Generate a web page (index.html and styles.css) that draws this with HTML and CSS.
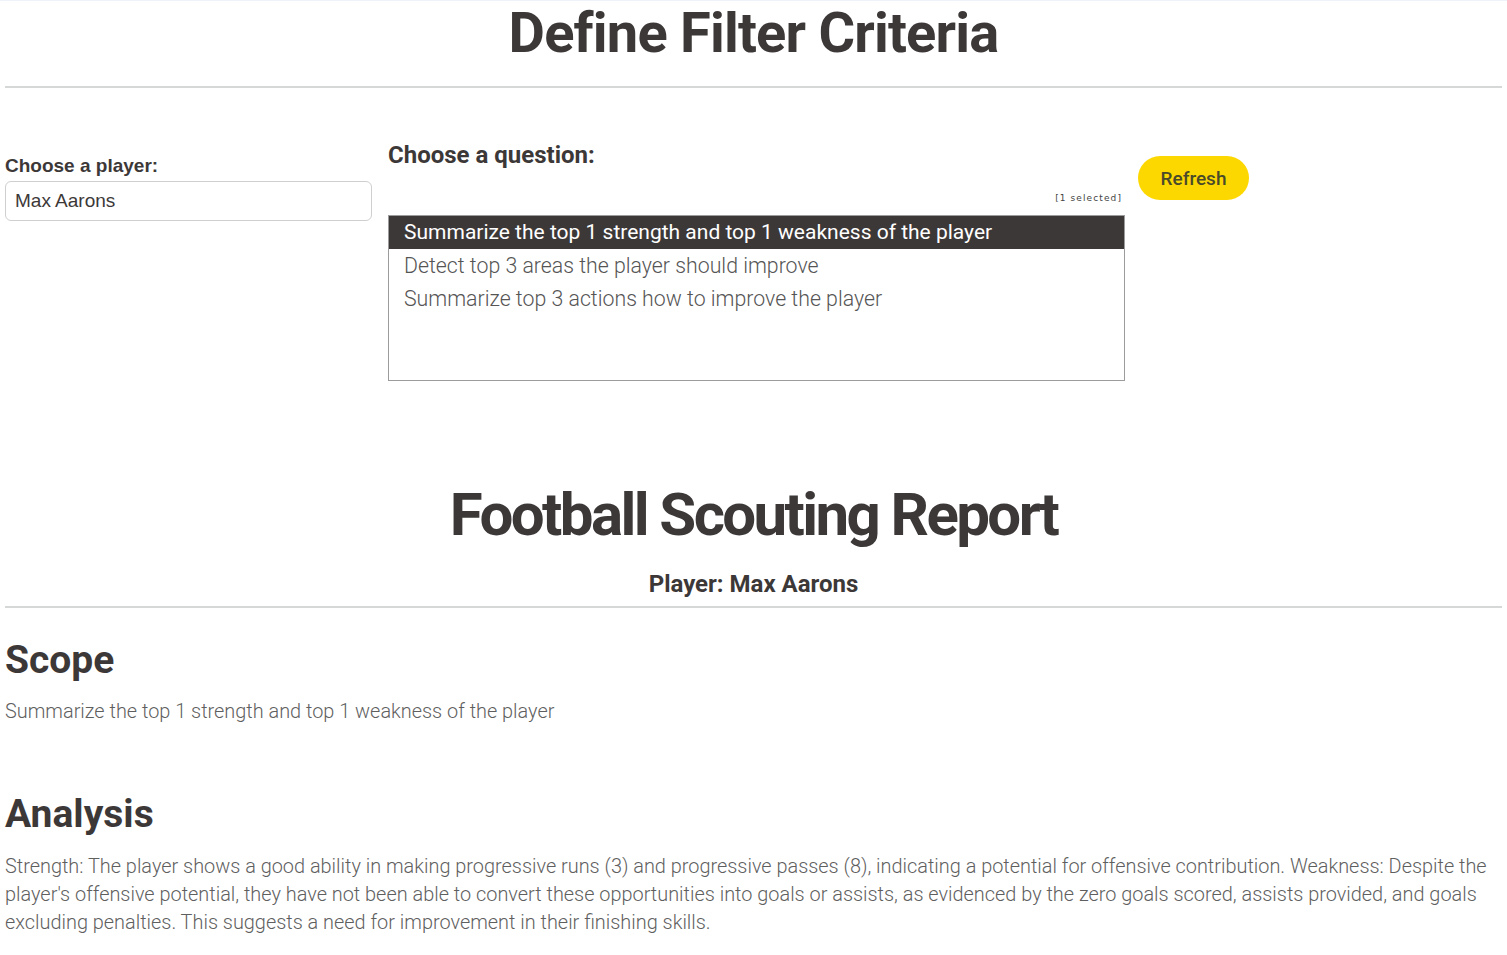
FILE: index.html
```html
<!DOCTYPE html>
<html lang="en">
<head>
  <meta charset="UTF-8">
  <meta name="viewport" content="width=device-width, initial-scale=1.0">
  <title>Football Scouting Report</title>
  <link rel="stylesheet" href="styles.css">
</head>
<body>
  <h1 class="page-title">Define Filter Criteria</h1>
  <hr class="rule">

  <div class="filters">
    <div class="col col-player">
      <label class="player-label" for="player">Choose a player:</label>
      <input class="player-input" id="player" type="text" value="Max Aarons">
    </div>

    <div class="col col-question">
      <div class="question-label">Choose a question:</div>
      <div class="selected-count">[1 selected]</div>
      <div class="listbox" role="listbox">
        <div class="option selected">Summarize the top 1 strength and top 1 weakness of the player</div>
        <div class="option">Detect top 3 areas the player should improve</div>
        <div class="option">Summarize top 3 actions how to improve the player</div>
      </div>
    </div>

    <div class="col col-action">
      <button class="refresh-btn">Refresh</button>
    </div>
  </div>

  <div class="report">
    <h1 class="report-title">Football Scouting Report</h1>
    <div class="report-player">Player: Max Aarons</div>
    <hr class="rule">

    <h2 class="section-title">Scope</h2>
    <p class="section-text">Summarize the top 1 strength and top 1 weakness of the player</p>

    <h2 class="section-title analysis">Analysis</h2>
    <p class="section-text analysis-text">Strength: The player shows a good ability in making progressive runs (3) and progressive passes (8), indicating a potential for offensive contribution. Weakness: Despite the player's offensive potential, they have not been able to convert these opportunities into goals or assists, as evidenced by the zero goals scored, assists provided, and goals excluding penalties. This suggests a need for improvement in their finishing skills.</p>
  </div>
</body>
</html>
```

FILE: styles.css
```css
body {
  margin: 0;
  padding: 0 5px;
  border-top: 1px solid #eef2f9;
  font-family: Roboto, "Noto Sans", sans-serif;
  color: #3d3838;
  background: #fff;
}
.page-title {
  margin: 0;
  padding-top: 4px;
  font-size: 56px;
  line-height: 1;
  font-weight: 700;
  letter-spacing: -0.8px;
  text-align: center;
}
.rule {
  border: none;
  height: 2px;
  background: #d6d8d8;
  margin: 0;
}
.page-title + .rule {
  margin-top: 25px;
}
.filters {
  display: flex;
  align-items: flex-start;
  gap: 16px;
  padding-top: 53px;
}
.col-player {
  width: 367px;
  padding-top: 14px;
}
.player-label {
  display: block;
  font-family: "Liberation Sans", Arial, sans-serif;
  font-weight: 700;
  font-size: 19px;
  line-height: 22px;
  margin-bottom: 4px;
}
.player-input {
  box-sizing: border-box;
  width: 100%;
  height: 40px;
  padding: 0 9px;
  border: 1px solid #cfcfcf;
  border-radius: 6px;
  font-family: "Liberation Sans", Arial, sans-serif;
  font-size: 19px;
  color: #3d3838;
}
.col-question {
  width: 737px;
}
.question-label {
  font-size: 24px;
  font-weight: 700;
  line-height: 28px;
}
.selected-count {
  text-align: right;
  font-family: "DejaVu Sans", sans-serif;
  font-size: 9px;
  letter-spacing: 1.1px;
  color: #444;
  margin-top: 23px;
  padding-right: 3px;
  line-height: 12px;
}
.listbox {
  margin-top: 11px;
  box-sizing: border-box;
  height: 166px;
  border: 1px solid #9c9c9c;
  background: #fff;
}
.option {
  height: 33px;
  line-height: 33px;
  padding-left: 15px;
  font-size: 21.3px;
  font-weight: 300;
  color: #555;
  white-space: nowrap;
}
.option.selected {
  background: #3d3838;
  color: #fff;
  font-size: 21px;
  font-weight: 400;
}
.col-action {
  padding-top: 15px;
  margin-left: -3px;
}
.refresh-btn {
  width: 111px;
  height: 44px;
  border: none;
  border-radius: 22px;
  background: #fdd800;
  color: #4a4a2a;
  font-family: Roboto, sans-serif;
  font-size: 19px;
  font-weight: 500;
  cursor: pointer;
}
.report {
  padding-top: 104px;
}
.report-title {
  margin: 0;
  font-size: 60px;
  line-height: 1;
  font-weight: 700;
  letter-spacing: -2.6px;
  text-align: center;
}
.report-player {
  margin-top: 25px;
  text-align: center;
  font-size: 24px;
  font-weight: 700;
  line-height: 28px;
}
.report-player + .rule {
  margin-top: 8px;
}
.section-title {
  margin: 29px 0 0;
  font-size: 39px;
  line-height: 46px;
  font-weight: 700;
}
.section-title.analysis {
  margin-top: 65px;
}
.section-text {
  margin: 15px 0 0;
  font-size: 19.9px;
  font-weight: 300;
  line-height: 28px;
  color: #5f5f5f;
}
.analysis-text {
  margin-top: 16px;
}
```
